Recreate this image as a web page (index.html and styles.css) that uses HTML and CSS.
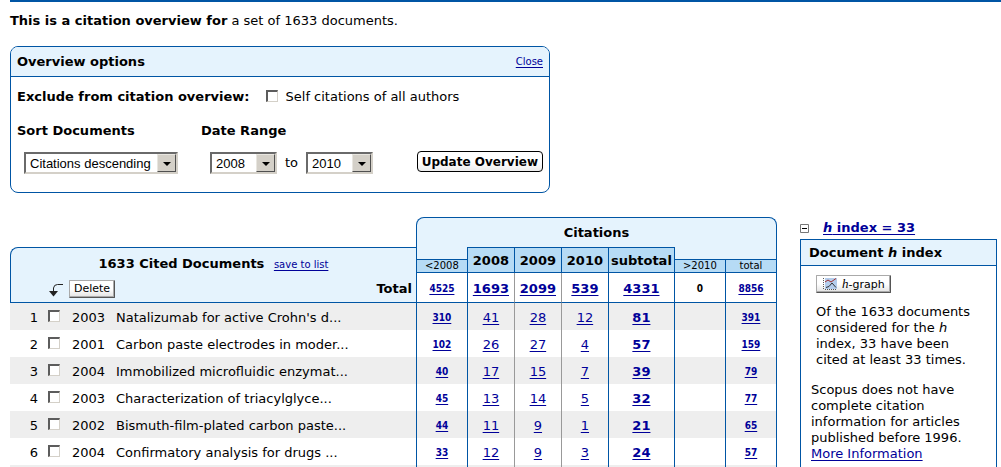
FILE: index.html
```html
<!DOCTYPE html>
<html lang="en">
<head>
<meta charset="utf-8">
<title>Citation overview</title>
<link rel="stylesheet" href="styles.css">
</head>
<body>
<header class="intro">
  <p><b>This is a citation overview for</b> a set of 1633 documents.</p>
</header>

<form class="options">
  <div class="options-head">
    <h2>Overview options</h2>
    <a class="small" href="#">Close</a>
  </div>
  <div class="options-body">
    <div class="exclude">
      <b>Exclude from citation overview:</b>
      <input class="tick" type="checkbox" id="self">
      <label for="self">Self citations of all authors</label>
    </div>
    <div class="fields">
      <div class="field">
        <label class="caption" for="sort">Sort Documents</label>
        <span class="select sort"><select id="sort"><option>Citations descending</option></select></span>
      </div>
      <div class="field">
        <label class="caption" for="from">Date Range</label>
        <div class="range">
          <span class="select"><select id="from"><option>2008</option></select></span>
          <label for="until">to</label>
          <span class="select"><select id="until"><option>2010</option></select></span>
        </div>
      </div>
      <button class="update" type="button">Update Overview</button>
    </div>
  </div>
</form>

<main class="results">
  <table class="cites">
    <colgroup>
      <col class="c-num"><col class="c-tick"><col class="c-year"><col>
      <col class="c-side"><col class="c-count"><col class="c-count"><col class="c-count"><col class="c-sub"><col class="c-side"><col class="c-last">
    </colgroup>
    <thead>
      <tr class="r-group">
        <td colspan="4"></td>
        <th colspan="7" class="group">Citations</th>
      </tr>
      <tr class="r-head">
        <th colspan="4" class="docs">1633 Cited Documents <a class="small save" href="#">save to list</a></th>
        <th class="side"><span>&lt;2008</span></th>
        <th class="yr">2008</th>
        <th class="yr">2009</th>
        <th class="yr">2010</th>
        <th class="yr">subtotal</th>
        <th class="side"><span>&gt;2010</span></th>
        <th class="side last"><span>total</span></th>
      </tr>
      <tr class="r-total">
        <td colspan="3" class="tools">
          <div>
            <svg width="15" height="13" viewBox="0 0 15 13" aria-hidden="true"><path d="M14 .5H8.500Q5 .5 4.500 4V8" fill="none" stroke="#222" /><path d="M0 7h9L4.500 12.500z" fill="#222"/></svg>
            <button class="btn" type="button">Delete</button>
          </div>
        </td>
        <th class="sum" scope="row">Total</th>
        <td class="edge mini"><a href="#">4525</a></td>
        <td class="edge big"><a href="#">1693</a></td>
        <td class="soft big"><a href="#">2099</a></td>
        <td class="soft big"><a href="#">539</a></td>
        <td class="edge big"><a href="#">4331</a></td>
        <td class="edge mini">0</td>
        <td class="edge mini last"><a href="#">8856</a></td>
      </tr>
    </thead>
    <tbody>
      <tr><td class="num">1</td><td><input class="tick" type="checkbox" aria-label="Select document 1"></td><td>2003</td><td class="title">Natalizumab for active Crohn's d...</td><td class="edge mini"><a href="#">310</a></td><td class="edge"><a href="#">41</a></td><td class="soft"><a href="#">28</a></td><td class="soft"><a href="#">12</a></td><td class="edge big"><a href="#">81</a></td><td class="edge"></td><td class="edge mini last"><a href="#">391</a></td></tr>
      <tr><td class="num">2</td><td><input class="tick" type="checkbox" aria-label="Select document 2"></td><td>2001</td><td class="title">Carbon paste electrodes in moder...</td><td class="edge mini"><a href="#">102</a></td><td class="edge"><a href="#">26</a></td><td class="soft"><a href="#">27</a></td><td class="soft"><a href="#">4</a></td><td class="edge big"><a href="#">57</a></td><td class="edge"></td><td class="edge mini last"><a href="#">159</a></td></tr>
      <tr><td class="num">3</td><td><input class="tick" type="checkbox" aria-label="Select document 3"></td><td>2004</td><td class="title">Immobilized microfluidic enzymat...</td><td class="edge mini"><a href="#">40</a></td><td class="edge"><a href="#">17</a></td><td class="soft"><a href="#">15</a></td><td class="soft"><a href="#">7</a></td><td class="edge big"><a href="#">39</a></td><td class="edge"></td><td class="edge mini last"><a href="#">79</a></td></tr>
      <tr><td class="num">4</td><td><input class="tick" type="checkbox" aria-label="Select document 4"></td><td>2003</td><td class="title">Characterization of triacylglyce...</td><td class="edge mini"><a href="#">45</a></td><td class="edge"><a href="#">13</a></td><td class="soft"><a href="#">14</a></td><td class="soft"><a href="#">5</a></td><td class="edge big"><a href="#">32</a></td><td class="edge"></td><td class="edge mini last"><a href="#">77</a></td></tr>
      <tr><td class="num">5</td><td><input class="tick" type="checkbox" aria-label="Select document 5"></td><td>2002</td><td class="title">Bismuth-film-plated carbon paste...</td><td class="edge mini"><a href="#">44</a></td><td class="edge"><a href="#">11</a></td><td class="soft"><a href="#">9</a></td><td class="soft"><a href="#">1</a></td><td class="edge big"><a href="#">21</a></td><td class="edge"></td><td class="edge mini last"><a href="#">65</a></td></tr>
      <tr><td class="num">6</td><td><input class="tick" type="checkbox" aria-label="Select document 6"></td><td>2004</td><td class="title">Confirmatory analysis for drugs ...</td><td class="edge mini"><a href="#">33</a></td><td class="edge"><a href="#">12</a></td><td class="soft"><a href="#">9</a></td><td class="soft"><a href="#">3</a></td><td class="edge big"><a href="#">24</a></td><td class="edge"></td><td class="edge mini last"><a href="#">57</a></td></tr>
    </tbody>
    <tfoot>
      <tr><td colspan="4"></td><td class="edge"></td><td class="edge"></td><td class="soft"></td><td class="soft"></td><td class="edge"></td><td class="edge"></td><td class="edge last"></td></tr>
    </tfoot>
  </table>

  <aside class="hindex">
    <div class="toggle">
      <svg width="9" height="9" viewBox="0 0 9 9" aria-hidden="true"><path d="M.5.5h8v8h-8z" fill="#fff" stroke="#777"/><path d="M2 4.500h5" stroke="#000"/></svg>
      <a href="#"><i>h</i> index = 33</a>
    </div>
    <section class="card">
      <h2>Document <i>h</i> index</h2>
      <div class="card-body">
        <button class="btn graph" type="button">
          <svg width="15" height="12" viewBox="0 0 15 12" aria-hidden="true"><path d="M3 0h12v11H3z" fill="#b4cdec"/><path d="M1.500 0v11M3 11.500h12" stroke="#555" stroke-dasharray="1 1"/><path d="M3 4l3-2 3 2 5-3.500" fill="none" stroke="#a03030"/><path d="M4 9.500l3-1 3-3.500 4 4.500" fill="none" stroke="#333"/></svg>
          <span><i>h</i>-graph</span>
        </button>
        <p class="summary">Of the 1633 documents considered for the <i>h</i> index, 33 have been cited at least 33 times.</p>
        <p>Scopus does not have complete citation information for articles published before 1996. <a href="#">More Information</a></p>
      </div>
    </section>
  </aside>
</main>
</body>
</html>
```
FILE: styles.css
```css
* {
  box-sizing: border-box;
}

:root {
  --blue: #0055a4;
  --pale: #e5f3fd;
  --sky: #b6dbf5;
  --link: #000099;
}

body {
  display: flex;
  flex-direction: column;
  min-height: 100vh;
  margin: 0;
  padding-left: 10px;
  background: #fff;
  color: #000;
  font: 13px/16px "DejaVu Sans", Verdana, sans-serif;
}

h2,
p {
  margin: 0;
  font-size: 13px;
}

a {
  color: var(--link);
  text-underline-offset: 2px;
}

.small {
  font-size: 10px;
  font-weight: normal;
}

.intro {
  padding: 11px 0 17px;
  border-top: 2px solid var(--blue);
}

/* Options panel */
.options {
  width: 540px;
  max-width: 100%;
  border: 1px solid var(--blue);
  border-radius: 8px;
  overflow: hidden;
}

.options-head {
  display: flex;
  justify-content: space-between;
  align-items: center;
  padding: 7px 6px 6px;
  border-bottom: 1px solid var(--blue);
  background: var(--pale);
}

.options-body {
  padding: 12px 6px 18px;
}

.exclude {
  display: flex;
  align-items: center;
}

.exclude .tick {
  margin: 0 8px 2px 16px;
}

.fields {
  display: flex;
  align-items: flex-end;
  gap: 23px;
  padding-top: 18px;
}

.field {
  display: flex;
  flex-direction: column;
  gap: 13px;
}

.caption {
  font-weight: bold;
}

.range {
  display: flex;
  align-items: center;
  gap: 8px;
  padding-left: 9px;
}

.select {
  display: block;
  position: relative;
  width: 67px;
}

.select.sort {
  width: 154px;
  margin-left: 7px;
}

.select select {
  appearance: none;
  display: block;
  width: 100%;
  height: 22px;
  padding: 0 18px 0 4px;
  border: 2px solid;
  border-color: #6a6a6a #d4d0c8 #d4d0c8 #6a6a6a;
  border-radius: 0;
  background: #fff;
  color: #000;
  font: 13px "Liberation Sans", Arial, sans-serif;
}

.select::before {
  content: "";
  position: absolute;
  top: 2px;
  right: 2px;
  bottom: 2px;
  width: 17px;
  border: 1px solid;
  border-color: #e8e6e0 #505050 #505050 #e8e6e0;
  background: #d4d0c8;
  pointer-events: none;
}

.select::after {
  content: "";
  position: absolute;
  top: 10px;
  right: 7px;
  border: 4px solid transparent;
  border-top-color: #000;
  border-bottom: 0;
  pointer-events: none;
}

.update {
  height: 21px;
  margin: 0 0 2px auto;
  padding: 0 4px;
  border: 1px solid #000;
  border-radius: 4px;
  background: linear-gradient(#fff 50%, #ececec);
  color: #000;
  font: bold 12px "DejaVu Sans", Verdana, sans-serif;
}

.tick {
  appearance: none;
  flex: none;
  display: block;
  width: 12px;
  height: 12px;
  margin: 0;
  border: 2px solid;
  border-width: 2px 1px 1px 2px;
  border-color: #5c5c5c #d4d0c8 #d4d0c8 #5c5c5c;
  background: #fff;
}

.btn {
  height: 18px;
  padding: 0 4px;
  border: 1px solid;
  border-color: #aaa #555 #555 #aaa;
  border-radius: 1px;
  background: linear-gradient(#fff 50%, #e2e2e2);
  box-shadow: inset -1px -1px #aaa;
  color: #000;
  font: 11px "DejaVu Sans", Verdana, sans-serif;
}

/* Results */
.results {
  flex: 1;
  display: grid;
  grid-template-columns: minmax(0, 1fr) 197px;
  gap: 23px;
  padding: 24px 4px 0 0;
}

.cites {
  align-self: start;
  width: 100%;
  table-layout: fixed;
  border-collapse: separate;
  border-spacing: 0;
}

.cites td,
.cites th {
  padding: 0;
  text-align: center;
}

.c-num { width: 33px; }
.c-tick { width: 24px; }
.c-year { width: 43px; }
.c-side { width: 51px; }
.c-count { width: 47px; }
.c-sub { width: 66px; }
.c-last { width: 52px; }

.r-group {
  height: 30px;
}

.cites .group {
  border: 1px solid var(--blue);
  border-bottom: 0;
  border-radius: 8px 8px 0 0;
  background: var(--pale);
}

.r-head {
  height: 26px;
}

.cites .docs {
  padding-top: 7px;
  border: 1px solid var(--blue);
  border-width: 1px 0 0 1px;
  border-radius: 8px 0 0 0;
  background: var(--pale);
}

.save {
  margin-left: 5px;
}

.cites .yr {
  padding-top: 2px;
  border: 1px solid var(--blue);
  border-right: 0;
  background: var(--sky);
}

.cites .side {
  padding-top: 12px;
  border: 1px solid var(--blue);
  border-width: 0 0 1px 1px;
  background: var(--pale);
  font-size: 10px;
  font-weight: normal;
  line-height: 12px;
}

.side span {
  display: block;
  border-top: 1px solid var(--blue);
  background: var(--sky);
}

.cites .side.last {
  border-width: 0 1px 1px 0;
}

.side.last span {
  border-left: 1px solid var(--blue);
}

.r-total {
  height: 30px;
}

.cites .r-total td,
.cites .r-total th {
  padding-top: 2px;
  border-bottom: 1px solid var(--blue);
}

.cites .tools {
  border-left: 1px solid var(--blue);
  background: var(--pale);
}

.tools div {
  display: flex;
  align-items: center;
  gap: 5px;
  padding-left: 38px;
}

.tools svg {
  flex: none;
  margin-top: 4px;
}

.cites .sum {
  padding-right: 4px;
  background: var(--pale);
  text-align: right;
}

.cites .edge {
  border-left: 1px solid var(--blue);
}

.cites .soft {
  border-left: 1px solid #999;
}

.cites .last {
  border-right: 1px solid var(--blue);
}

.cites .big {
  font-weight: bold;
}

.cites .mini {
  font-family: "DejaVu Sans Condensed", "DejaVu Sans", Tahoma, sans-serif;
  font-size: 10px;
  font-weight: bold;
}

.cites tbody tr {
  height: 27px;
}

.cites tbody td {
  padding-top: 2px;
}

.cites tbody tr:nth-child(odd),
.cites tfoot tr {
  background: #eee;
}

.cites tfoot tr {
  height: 2px;
}

.cites .num {
  padding-right: 5px;
  text-align: right;
}

.cites tbody .tick {
  margin: 0 auto 3px 5px;
}

.cites .title {
  padding-left: 6px;
  overflow: hidden;
  text-align: left;
  white-space: nowrap;
}

/* h index */
.hindex {
  display: flex;
  flex-direction: column;
}

.toggle {
  display: flex;
  align-items: center;
  gap: 14px;
  padding: 3px 0;
  font-weight: bold;
}

.card {
  flex: 1;
  border: 1px solid var(--blue);
  border-bottom: 0;
}

.card h2 {
  padding: 5px 8px 4px;
  border-bottom: 1px solid var(--blue);
  background: var(--pale);
}

.card-body {
  padding: 9px 10px 0;
}

.graph {
  display: flex;
  align-items: center;
  gap: 5px;
  margin-left: 5px;
  padding: 0 5px;
}

.graph i {
  font-family: "Liberation Serif", serif;
  font-size: 13px;
}

.summary {
  padding: 11px 16px 14px 5px;
}
```
